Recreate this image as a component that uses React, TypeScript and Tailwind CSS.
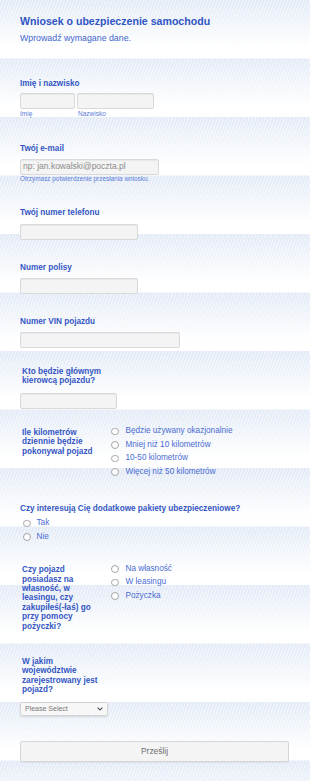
import React from 'react';

const label = "text-[8.2px] leading-[9.4px] font-bold text-[#3556c4]";
const box = "h-[16px] rounded-[2px] border border-[#d9d9d9] bg-[#f4f4f4] shadow-[inset_0_1px_1px_rgba(0,0,0,0.05)]";

function Radio() {
  return <span className="block w-[7.5px] h-[7.5px] mt-[1px] rounded-full border border-[#a5a5a5] bg-white shrink-0" />;
}

function Option({ text, gap = "gap-[7px]" }: { text: string; gap?: string }) {
  return (
    <div className={`flex items-center h-[13.5px] ${gap}`}>
      <Radio />
      <span className="text-[8.2px] leading-[13.5px] text-[#4a6bd2] whitespace-nowrap">{text}</span>
    </div>
  );
}

export default function App() {
  return (
    <div className="min-h-[781px] font-['Liberation_Sans',Arial,sans-serif] bg-[image:repeating-linear-gradient(110deg,rgba(255,255,255,0.5)_0_1px,transparent_1px_3px),linear-gradient(to_bottom,#e2eaf6,#ffffff_82%)] bg-[length:100%_58.5px]">
      <div className="pl-[20px] pr-[21px] pt-[15px] pb-[19px]">
        {/* Header */}
        <h1 className="text-[10.6px] leading-[13px] font-bold text-[#2f55c4]">Wniosek o ubezpieczenie samochodu</h1>
        <p className="mt-[5px] text-[8.8px] leading-[11px] text-[#4467cf]">Wprowadź wymagane dane.</p>

        {/* Imię i nazwisko */}
        <div className={`mt-[34.5px] ${label}`}>Imię i nazwisko</div>
        <div className="mt-[5px] flex gap-[2px]">
          <div className={`${box} w-[55px]`} />
          <div className={`${box} w-[77px]`} />
        </div>
        <div className="mt-[1.25px] flex text-[6.5px] leading-[8px] text-[#5a7ed8]">
          <span className="w-[58px]">Imię</span>
          <span>Nazwisko</span>
        </div>

        {/* E-mail */}
        <div className={`mt-[25.75px] ${label}`}>Twój e-mail</div>
        <div className={`mt-[5.3px] ${box} w-[139px] flex items-center pl-[2px] text-[8.5px] text-[#8c8c8c]`}>
          np: jan.kowalski@poczta.pl
        </div>
        <div className="mt-[0.6px] text-[6.4px] leading-[8px] text-[#5a7ed8]">Otrzymasz potwierdzenie przesłania wniosku.</div>

        {/* Telefon */}
        <div className={`mt-[25.2px] ${label}`}>Twój numer telefonu</div>
        <div className={`mt-[6px] ${box} w-[118px]`} />

        {/* Polisa */}
        <div className={`mt-[23.5px] ${label}`}>Numer polisy</div>
        <div className={`mt-[5.4px] ${box} w-[118px]`} />

        {/* VIN */}
        <div className={`mt-[23.2px] ${label}`}>Numer VIN pojazdu</div>
        <div className={`mt-[5.4px] ${box} w-[160px]`} />

        {/* Kierowca */}
        <div className={`mt-[18.7px] ml-[2px] w-[82px] ${label}`}>Kto będzie głównym kierowcą pojazdu?</div>
        <div className={`mt-[7.5px] ${box} w-[97px]`} />

        {/* Kilometry */}
        <div className="mt-[15.1px] flex items-start">
          <div className={`mt-[3.6px] ml-[2px] w-[82px] ${label}`}>Ile kilometrów dziennie będzie pokonywał pojazd</div>
          <div className="ml-[7px]">
            <Option text="Będzie używany okazjonalnie" />
            <Option text="Mniej niż 10 kilometrów" />
            <Option text="10-50 kilometrów" />
            <Option text="Więcej niż 50 kilometrów" />
          </div>
        </div>

        {/* Pakiety */}
        <div className={`mt-[26.1px] ${label}`}>Czy interesują Cię dodatkowe pakiety ubezpieczeniowe?</div>
        <div className="mt-[2.5px] ml-[3px]">
          <Option text="Tak" gap="gap-[6px]" />
          <Option text="Nie" gap="gap-[6px]" />
        </div>

        {/* Własność */}
        <div className="mt-[18.5px] flex items-start">
          <div className={`mt-[3.6px] ml-[2px] w-[82px] ${label}`}>
            Czy pojazd posiadasz na własność, w leasingu, czy zakupiłeś(-łaś) go przy pomocy pożyczki?
          </div>
          <div className="ml-[7px]">
            <Option text="Na własność" />
            <Option text="W leasingu" />
            <Option text="Pożyczka" />
          </div>
        </div>

        {/* Województwo */}
        <div className={`mt-[25.7px] ml-[2px] w-[82px] ${label}`}>W jakim województwie zarejestrowany jest pojazd?</div>
        <div className="mt-[7.4px] h-[14px] w-[88px] rounded-[2px] border border-[#d4d4d4] bg-[#f7f7f7] shadow-[0_1px_2px_rgba(0,0,0,0.12)] flex items-center justify-between pl-[4px] pr-[4px]">
          <span className="text-[7px] text-[#777777]">Please Select</span>
          <svg width="6" height="4" viewBox="0 0 6 4" className="text-[#556]">
            <path d="M0.6 0.6 L3 3 L5.4 0.6" fill="none" stroke="currentColor" strokeWidth="1.2" />
          </svg>
        </div>

        {/* Submit */}
        <button className="mt-[25px] block h-[21px] w-[269px] rounded-[2px] border border-[#d6d6d6] bg-[#f4f4f4] shadow-[0_1px_1px_rgba(0,0,0,0.06)] text-[8.4px] text-[#6f6f6f]">
          Prześlij
        </button>
      </div>
    </div>
  );
}
